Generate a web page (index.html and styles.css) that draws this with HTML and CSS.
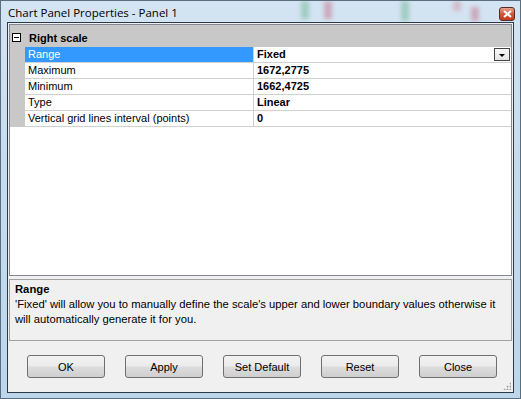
FILE: index.html
```html
<!DOCTYPE html>
<html lang="en">
<head>
    <meta charset="UTF-8">
    <title>Chart Panel Properties - Panel 1</title>
    <link rel="stylesheet" href="styles.css">
</head>
<body>

<div class="window">
    <div class="titlebar">
        <span class="candle c1"></span>
        <span class="candle c2"></span>
        <span class="candle c3"></span>
        <span class="candle c4"></span>
        <span class="candle c5"></span>
        <span class="title">Chart Panel Properties - Panel 1</span>
        <span class="close">
            <svg width="9" height="8" viewBox="0 0 9 8">
                <path d="M1 1 L8 7 M8 1 L1 7" stroke="#fff" stroke-width="2"/>
            </svg>
        </span>
    </div>

    <div class="client">
        <div class="grid">
            <div class="category">
                <span class="toggle"></span>
                <span class="cat-name">Right scale</span>
            </div>
            <div class="row selected">
                <div class="gutter"></div>
                <div class="label">Range</div>
                <div class="value">Fixed<span class="drop"></span></div>
            </div>
            <div class="row">
                <div class="gutter"></div>
                <div class="label">Maximum</div>
                <div class="value">1672,2775</div>
            </div>
            <div class="row">
                <div class="gutter"></div>
                <div class="label">Minimum</div>
                <div class="value">1662,4725</div>
            </div>
            <div class="row">
                <div class="gutter"></div>
                <div class="label">Type</div>
                <div class="value">Linear</div>
            </div>
            <div class="row">
                <div class="gutter"></div>
                <div class="label">Vertical grid lines interval (points)</div>
                <div class="value">0</div>
            </div>
        </div>

        <div class="help">
            <div class="help-title">Range</div>
            <div class="help-text">'Fixed' will allow you to manually define the scale's upper and lower boundary values otherwise it will automatically generate it for you.</div>
        </div>

        <div class="buttons">
            <button class="btn">OK</button>
            <button class="btn">Apply</button>
            <button class="btn">Set Default</button>
            <button class="btn">Reset</button>
            <button class="btn">Close</button>
        </div>

        <div class="grip"></div>
    </div>
</div>

</body>
</html>
```

FILE: styles.css
```css
body {
    margin: 0;
    padding: 0;
    font-family: "Liberation Sans", Arial, sans-serif;
    font-size: 11px;
    color: #000;
}
.window {
    position: relative;
    width: 521px;
    height: 399px;
    box-sizing: border-box;
    border: 1px solid #5a6e80;
    background: linear-gradient(#d4e4f2, #c6dcee 40%, #bcd6ec);
    overflow: hidden;
}
.titlebar {
    position: relative;
    height: 21px;
}
.candle {
    position: absolute;
    top: 0;
    width: 8px;
    height: 18px;
    filter: blur(2px);
    opacity: 0.35;
}
.c1 { left: 300px; background: #3fa36a; }
.c2 { left: 323px; background: #c0405a; }
.c3 { left: 400px; background: #3fa36a; height: 20px; }
.c4 { left: 452px; background: #d07080; height: 10px; }
.c5 { left: 470px; background: #c0405a; top: 6px; height: 14px; }
.title {
    position: absolute;
    left: 7px;
    top: 4px;
    font-family: "Open Sans", "Liberation Sans", sans-serif;
    font-size: 11.5px;
    color: #000;
}
.close {
    position: absolute;
    right: 5px;
    top: 6px;
    width: 16px;
    height: 14px;
    box-sizing: border-box;
    border: 1px solid #5a2a22;
    border-radius: 3px;
    background: linear-gradient(#e8a48c, #d2553a 50%, #c23a20);
    display: flex;
    align-items: center;
    justify-content: center;
}
.close svg {
    display: block;
}
.client {
    position: relative;
    margin: 0 6px;
    height: 369px;
    border: 1px solid #2c3a48;
    background: #f0f0f0;
}
.grid {
    margin: 1px 0 0 1px;
    width: 501px;
    height: 250px;
    border: 1px solid #828790;
    background: #fff;
}
.category {
    display: flex;
    align-items: center;
    height: 22px;
    box-sizing: border-box;
    padding: 3px 0 0 2px;
    background: #c8c8c8;
}
.toggle {
    position: relative;
    width: 7px;
    height: 7px;
    border: 1px solid #000;
    background: #fff;
}
.toggle::after {
    content: "";
    position: absolute;
    left: 1px;
    top: 3px;
    width: 5px;
    height: 1px;
    background: #000;
}
.cat-name {
    font-weight: bold;
    margin-left: 8px;
}
.row {
    display: grid;
    grid-template-columns: 15px 229px 1fr;
    height: 16px;
}
.gutter {
    background: #c8c8c8;
}
.label {
    padding-left: 3px;
    line-height: 15px;
    border-bottom: 1px solid #d0d0d0;
    border-right: 1px solid #d0d0d0;
    white-space: nowrap;
}
.value {
    position: relative;
    padding-left: 3px;
    line-height: 15px;
    font-weight: bold;
    border-bottom: 1px solid #d0d0d0;
}
.selected .label {
    background: #3399ff;
    color: #fff;
}
.drop {
    position: absolute;
    right: 1px;
    top: 1px;
    width: 16px;
    height: 13px;
    box-sizing: border-box;
    border: 1px solid #444;
    background: linear-gradient(#fafafa, #e4e4e4);
}
.drop::after {
    content: "";
    position: absolute;
    left: 4px;
    top: 5px;
    border-left: 3px solid transparent;
    border-right: 3px solid transparent;
    border-top: 3px solid #000;
}
.help {
    margin: 3px 0 0 1px;
    width: 503px;
    height: 62px;
    box-sizing: border-box;
    border: 1px solid #a0a0a0;
    padding: 0 5px;
    font-size: 11.25px;
}
.help-title {
    font-weight: bold;
    margin-top: 2px;
    line-height: 15px;
}
.help-text {
    line-height: 15px;
}
.buttons {
    display: flex;
    gap: 20px;
    padding: 14px 0 0 19px;
}
.btn {
    width: 78px;
    height: 23px;
    border: 1px solid #707070;
    border-radius: 3px;
    background: linear-gradient(#f2f2f2, #ebebeb 48%, #dddddd 52%, #cfcfcf);
    font-family: "Liberation Sans", Arial, sans-serif;
    font-size: 11px;
    color: #000;
    padding: 0;
}
.grip {
    position: absolute;
    right: 2px;
    bottom: 2px;
    width: 8px;
    height: 8px;
    background: radial-gradient(circle, #a0a0a0 0.8px, transparent 1.2px) 0 0 / 3px 3px;
    clip-path: polygon(100% 0, 100% 100%, 0 100%);
}
```
